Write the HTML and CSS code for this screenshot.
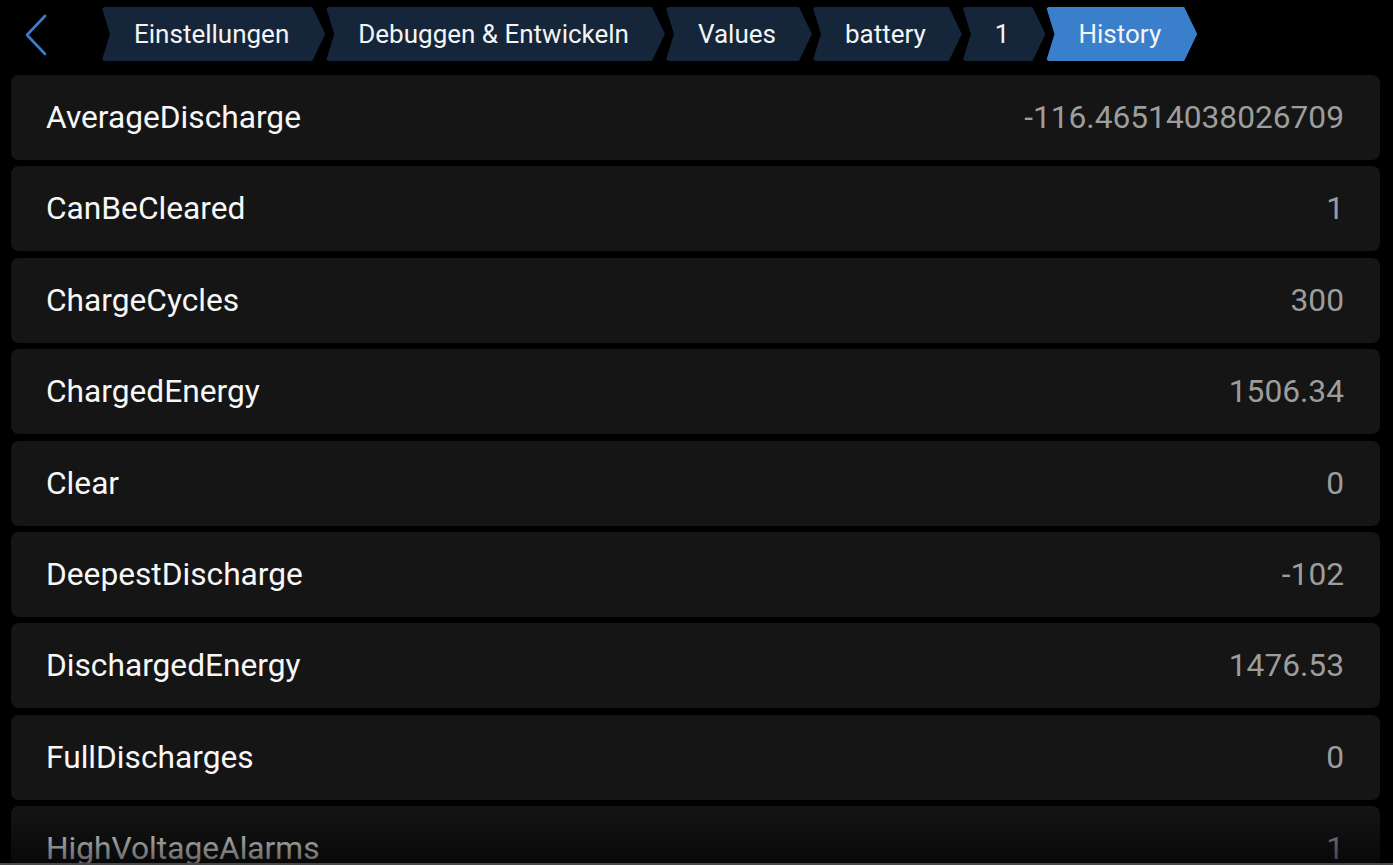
FILE: index.html
```html
<!DOCTYPE html>
<html lang="de">
<head>
<meta charset="utf-8">
<title>History</title>
<link rel="stylesheet" href="styles.css">
</head>
<body>
<div class="screen">
  <header class="topbar">
    <button class="back" aria-label="Zurück">
      <svg width="26" height="42" viewBox="0 0 26 42"><path d="M22 2 L4 21 L22 40" fill="none" stroke="#3a7fcb" stroke-width="2.6" stroke-linecap="round" stroke-linejoin="round"/></svg>
    </button>
    <nav class="crumbs">
      <span class="crumb">Einstellungen</span>
      <span class="crumb">Debuggen &amp; Entwickeln</span>
      <span class="crumb">Values</span>
      <span class="crumb">battery</span>
      <span class="crumb">1</span>
      <span class="crumb active">History</span>
    </nav>
  </header>
  <main class="list">
    <div class="row"><span class="label">AverageDischarge</span><span class="value">-116.46514038026709</span></div>
    <div class="row"><span class="label">CanBeCleared</span><span class="value">1</span></div>
    <div class="row"><span class="label">ChargeCycles</span><span class="value">300</span></div>
    <div class="row"><span class="label">ChargedEnergy</span><span class="value">1506.34</span></div>
    <div class="row"><span class="label">Clear</span><span class="value">0</span></div>
    <div class="row"><span class="label">DeepestDischarge</span><span class="value">-102</span></div>
    <div class="row"><span class="label">DischargedEnergy</span><span class="value">1476.53</span></div>
    <div class="row"><span class="label">FullDischarges</span><span class="value">0</span></div>
    <div class="row"><span class="label">HighVoltageAlarms</span><span class="value">1</span></div>
  </main>
  <div class="fade"></div>
</div>
</body>
</html>
```

FILE: styles.css
```css
html, body {
  margin: 0;
  padding: 0;
  background: #000;
}
body {
  font-family: Roboto, "Noto Sans", "Liberation Sans", sans-serif;
  color: #fff;
}
.screen {
  position: relative;
  width: 1393px;
  height: 865px;
  overflow: hidden;
  background: #000;
}
.topbar {
  display: flex;
  align-items: flex-start;
  height: 75px;
  box-sizing: border-box;
  padding-top: 7px;
}
.back {
  background: none;
  border: 0;
  padding: 0;
  margin: 7px 0 0 23px;
  width: 26px;
  height: 42px;
  display: flex;
}
.crumbs {
  display: flex;
  gap: 1px;
  margin-left: 53px;
  height: 55px;
}
.crumb {
  display: flex;
  align-items: center;
  height: 54px;
  padding: 0 36px 0 32px;
  background: #15263b;
  font-size: 26px;
  color: #f4f4f4;
  white-space: nowrap;
  clip-path: polygon(2px 0, calc(100% - 13px) 0, 100% 50%, calc(100% - 13px) 100%, 2px 100%, 0 98%, 8px 50%, 0 2%);
  border-radius: 3px;
}
.crumb.active {
  background: #3a7fcb;
}
.list {
  display: flex;
  flex-direction: column;
  gap: 6.4px;
  padding: 0 13px 0 11px;
}
.row {
  display: flex;
  align-items: center;
  justify-content: space-between;
  flex: none;
  height: 85px;
  padding: 0 36px 0 35px;
  background: #151515;
  border-radius: 8px;
  font-size: 31.7px;
}
.label {
  color: #f7f7f7;
}
.value {
  color: #9d9d9d;
}
.fade {
  position: absolute;
  left: 0;
  right: 0;
  bottom: 0;
  height: 60px;
  background: linear-gradient(to bottom, rgba(0,0,0,0) 0%, rgba(0,0,0,0.6) 100%);
  border-bottom: 2px solid #4a4a4a;
  pointer-events: none;
}
```
